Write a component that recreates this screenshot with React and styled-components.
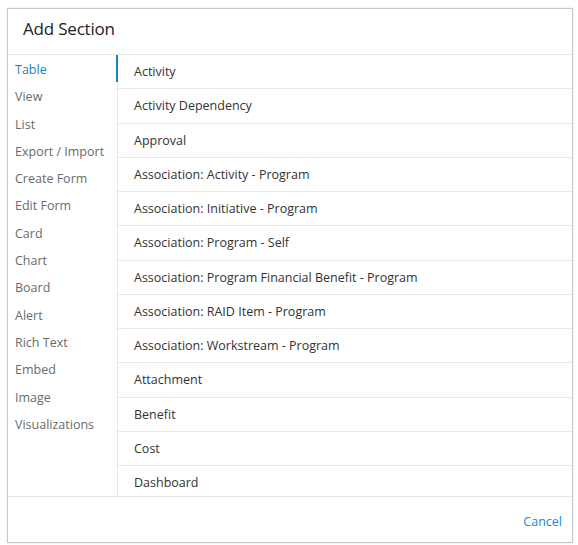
import * as React from "react";
import styled, { createGlobalStyle } from "styled-components";

const GlobalStyle = createGlobalStyle`
  html, body {
    margin: 0;
    padding: 0;
    background: #ffffff;
  }
  body {
    font-family: "Open Sans", "Liberation Sans", sans-serif;
  }
`;

const sectionTypes = [
  "Table",
  "View",
  "List",
  "Export / Import",
  "Create Form",
  "Edit Form",
  "Card",
  "Chart",
  "Board",
  "Alert",
  "Rich Text",
  "Embed",
  "Image",
  "Visualizations"
];

const entities = [
  "Activity",
  "Activity Dependency",
  "Approval",
  "Association: Activity - Program",
  "Association: Initiative - Program",
  "Association: Program - Self",
  "Association: Program Financial Benefit - Program",
  "Association: RAID Item - Program",
  "Association: Workstream - Program",
  "Attachment",
  "Benefit",
  "Cost",
  "Dashboard"
];

export default function App() {
  const [active, setActive] = React.useState("Table");

  return (
    <>
      <GlobalStyle />
      <Page>
        <Dialog>
          <Header>
            <Title>Add Section</Title>
          </Header>
          <Body>
            <TypeNav>
              {sectionTypes.map((type) => (
                <TypeItem
                  key={type}
                  $active={type === active}
                  onClick={() => setActive(type)}
                >
                  {type}
                </TypeItem>
              ))}
            </TypeNav>
            <EntityList>
              {entities.map((name) => (
                <EntityRow key={name}>{name}</EntityRow>
              ))}
            </EntityList>
          </Body>
          <Footer>
            <CancelButton>Cancel</CancelButton>
          </Footer>
        </Dialog>
      </Page>
    </>
  );
}

const Page = styled.div`
  padding: 8px 5px 2px 7px;
`;

const Dialog = styled.div`
  width: 566px;
  height: 535px;
  border: 1px solid #c9c9c9;
  box-shadow: 0 0 2px rgba(0, 0, 0, 0.12);
  background: #fff;
  display: flex;
  flex-direction: column;
  box-sizing: border-box;
`;

const Header = styled.div`
  height: 46px;
  flex-shrink: 0;
  padding: 9px 15px 0;
  box-sizing: border-box;
  border-bottom: 1px solid #e6e6e6;
`;

const Title = styled.h2`
  margin: 0;
  font-size: 17px;
  line-height: 22px;
  font-weight: 400;
  color: #222;
  letter-spacing: -0.2px;
`;

const Body = styled.div`
  height: 442px;
  flex-shrink: 0;
  display: flex;
  box-sizing: border-box;
  border-bottom: 1px solid #e6e6e6;
`;

const TypeNav = styled.ul`
  list-style: none;
  margin: 0;
  padding: 1px 0 0;
  width: 109px;
  flex-shrink: 0;
  border-right: 1px solid #e6e6e6;
`;

const TypeItem = styled.li`
  position: relative;
  height: 27.3px;
  line-height: 27.3px;
  padding-left: 7px;
  font-size: 12.5px;
  color: ${(p) => (p.$active ? "#1b7fc0" : "#6b6b6b")};
  cursor: pointer;
  white-space: nowrap;

  &::after {
    content: "";
    display: ${(p) => (p.$active ? "block" : "none")};
    position: absolute;
    right: -1px;
    top: -1px;
    width: 2px;
    height: 27px;
    background: #1b7fc0;
  }
`;

const EntityList = styled.div`
  flex: 1;
  overflow-y: auto;
  scrollbar-width: none;

  &::-webkit-scrollbar {
    display: none;
  }
`;

const EntityRow = styled.div`
  height: 33.25px;
  line-height: 33.25px;
  padding-left: 16px;
  font-size: 12.5px;
  color: #333;
  border-bottom: 1px solid #e8e8e8;
  white-space: nowrap;

  &:last-child {
    border-bottom: none;
  }
`;

const Footer = styled.div`
  flex: 1;
  display: flex;
  align-items: center;
  justify-content: flex-end;
  padding: 3px 10px 0;
`;

const CancelButton = styled.button`
  border: none;
  background: none;
  padding: 0;
  font-family: inherit;
  font-size: 12.5px;
  color: #1b88c8;
  cursor: pointer;
`;
